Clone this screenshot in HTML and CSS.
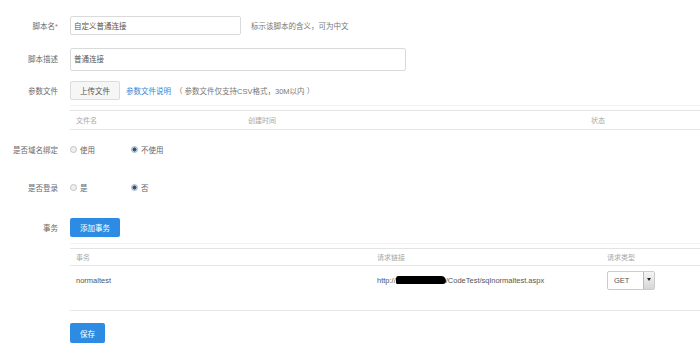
FILE: index.html
```html
<!DOCTYPE html>
<html>
<head>
<meta charset="utf-8">
<title>脚本编辑</title>
<link rel="stylesheet" href="styles.css">
</head>
<body>

<form class="script-form">

  <div class="row row-name">
    <label class="label">脚本名<span class="req">*</span></label>
    <input type="text" class="text-input" value="自定义普通连接">
    <span class="hint">标示该脚本的含义，可为中文</span>
  </div>

  <div class="row row-desc">
    <label class="label label-top">脚本描述</label>
    <textarea class="text-area">普通连接</textarea>
  </div>

  <div class="row row-file">
    <label class="label">参数文件</label>
    <button type="button" class="btn-default">上传文件</button>
    <a class="link">参数文件说明</a>
    <span class="note">（ 参数文件仅支持CSV格式，30M以内 ）</span>
  </div>

  <div class="grid-table file-table">
    <div class="grid-head">
      <span>文件名</span>
      <span>创建时间</span>
      <span>状态</span>
    </div>
  </div>

  <div class="row row-domain">
    <label class="label">是否域名绑定</label>
    <span class="option"><span class="radio"></span>使用</span>
    <span class="option"><span class="radio checked"></span>不使用</span>
  </div>

  <div class="row row-login">
    <label class="label">是否登录</label>
    <span class="option"><span class="radio"></span>是</span>
    <span class="option"><span class="radio checked"></span>否</span>
  </div>

  <div class="row row-tx">
    <label class="label">事务</label>
    <button type="button" class="btn-primary">添加事务</button>
  </div>

  <div class="grid-table tx-table">
    <div class="grid-head">
      <span>事务</span>
      <span>请求链接</span>
      <span>请求类型</span>
    </div>
    <div class="grid-row">
      <span>normaltest</span>
      <span>http://<span class="redacted"></span>/CodeTest/sqlnormaltest.aspx</span>
      <span>
        <span class="select">
          <span class="select-value">GET</span>
          <span class="select-arrow"></span>
        </span>
      </span>
    </div>
  </div>

  <div class="row row-save">
    <button type="button" class="btn-primary btn-save">保存</button>
  </div>

</form>

</body>
</html>
```

FILE: styles.css
```css
* {
  box-sizing: border-box;
}

body {
  margin: 0;
  background: #fff;
  font-family: "Liberation Sans", "Noto Sans CJK SC", sans-serif;
  font-size: 7.5px;
  color: #666;
  overflow: hidden;
}

.script-form {
  padding-top: 16px;
}

.row {
  display: flex;
  align-items: center;
  height: 19px;
}

.label {
  width: 58px;
  margin-right: 12px;
  text-align: right;
  color: #6a6a6a;
  flex-shrink: 0;
}

.label-top {
  align-self: flex-start;
  padding-top: 5px;
}

.req {
  color: #e55;
}

.text-input, .text-area {
  font-family: inherit;
  font-size: 7.5px;
  color: #555;
  border: 1px solid #dadada;
  border-radius: 2px;
  padding: 0 3px;
  margin: 0;
  outline: none;
  background: #fff;
}

.text-input {
  width: 171px;
  height: 19px;
}

.hint {
  margin-left: 10px;
  color: #777;
}

.row-desc {
  margin-top: 13px;
  height: 23px;
}

.text-area {
  width: 336px;
  height: 23px;
  padding-top: 4px;
  resize: none;
  overflow: hidden;
}

.row-file {
  margin-top: 10px;
}

.btn-default {
  width: 50px;
  height: 19px;
  font-family: inherit;
  font-size: 7.5px;
  color: #555;
  background: #f6f6f6;
  border: 1px solid #dcdcdc;
  border-radius: 2px;
  padding: 0;
}

.link {
  margin-left: 6px;
  color: #3a86d4;
}

.note {
  margin-left: 4px;
  color: #777;
}

.grid-table {
  margin-left: 70px;
  border-top: 1px solid #f3f3f3;
  padding-top: 4px;
}

.grid-head, .grid-row {
  display: grid;
}

.grid-head {
  border-top: 1px solid #e3e3e3;
  border-bottom: 1px solid #e6e6e6;
  color: #a8a8a8;
  font-size: 7px;
  align-items: center;
}

.grid-head span, .grid-row > span {
  padding-left: 6px;
}

.file-table {
  margin-top: 5px;
}

.file-table .grid-head {
  grid-template-columns: 172px 343px 1fr;
  height: 20px;
}

.row-domain {
  margin-top: 10px;
}

.row-login {
  margin-top: 19px;
}

.option {
  display: flex;
  align-items: center;
  width: 61px;
  color: #666;
}

.radio {
  width: 7px;
  height: 7px;
  border-radius: 50%;
  border: 1px solid #c2c2c2;
  background: #efefef;
  margin-right: 3px;
}

.radio.checked {
  border-color: #a9b8c8;
  background: radial-gradient(circle, #37546f 0 1.8px, #d3dde8 2.3px);
}

.row-tx {
  margin-top: 21px;
}

.btn-primary {
  height: 19px;
  font-family: inherit;
  font-size: 7.5px;
  color: #fff;
  background: #2d8be4;
  border: none;
  border-radius: 2px;
  padding: 0;
}

.row-tx .btn-primary {
  width: 50px;
}

.tx-table {
  margin-top: 6px;
}

.tx-table .grid-head {
  grid-template-columns: 301px 230px 1fr;
  height: 18px;
}

.tx-table .grid-row {
  grid-template-columns: 301px 230px 1fr;
  height: 45px;
  border-bottom: 1px solid #e8e8e8;
  padding-top: 5px;
  color: #555;
}

.grid-row > span {
  padding-top: 5px;
}

.grid-row > span:last-child {
  padding-top: 0;
}

.redacted {
  display: inline-block;
  width: 50px;
  height: 8px;
  background: #000;
  border-radius: 3px 6px 4px 2px;
  vertical-align: -1px;
}

.select {
  display: flex;
  width: 48px;
  height: 19px;
  border: 1px solid #ccc;
  border-radius: 2px;
  background: #fff;
  align-items: stretch;
}

.select-value {
  flex: 1;
  padding-left: 6px;
  display: flex;
  align-items: center;
  color: #555;
}

.select-arrow {
  width: 11px;
  border-left: 1px solid #bbb;
  background: linear-gradient(#f4f4f4, #d6d6d6);
  position: relative;
}

.select-arrow::after {
  content: "";
  position: absolute;
  left: 3px;
  top: 6px;
  border-left: 2.5px solid transparent;
  border-right: 2.5px solid transparent;
  border-top: 3px solid #222;
}

.row-save {
  margin-top: 12px;
  padding-left: 70px;
  height: 20px;
}

.btn-save {
  width: 35px;
  height: 20px;
}
```
